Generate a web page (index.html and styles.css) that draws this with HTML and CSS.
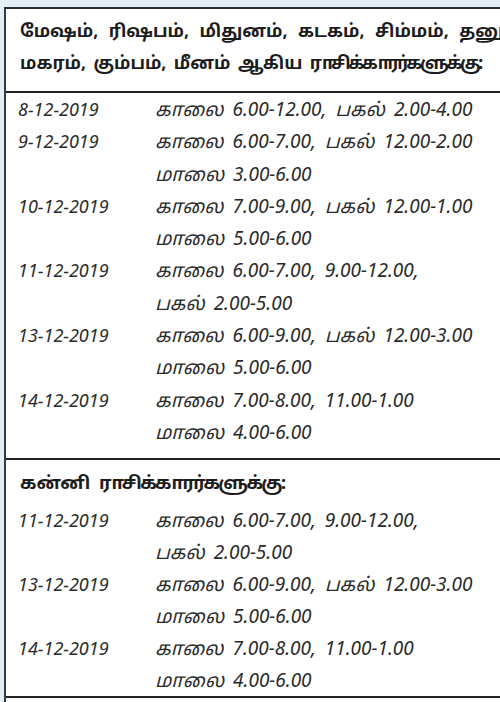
FILE: index.html
```html
<!DOCTYPE html>
<html lang="ta">
<head>
<meta charset="utf-8">
<link rel="stylesheet" href="styles.css">
</head>
<body>
<div class="frame">
  <section class="sec sec-first">
    <div class="head">
      <div class="hl">மேஷம், ரிஷபம், மிதுனம், கடகம், சிம்மம், தனுசு,</div>
      <div class="hl hl-two">மகரம், கும்பம், மீனம் ஆகிய <span class="tight">ராசிக்காரர்களுக்கு:</span></div>
    </div>
    <div class="rows rows-first">
      <div class="d">8-12-2019</div><div class="t">காலை 6.00-12.00, பகல் 2.00-4.00</div>
      <div class="d">9-12-2019</div><div class="t">காலை 6.00-7.00, பகல் 12.00-2.00<br>மாலை 3.00-6.00</div>
      <div class="d">10-12-2019</div><div class="t">காலை 7.00-9.00, பகல் 12.00-1.00<br>மாலை 5.00-6.00</div>
      <div class="d">11-12-2019</div><div class="t">காலை 6.00-7.00, 9.00-12.00,<br>பகல் 2.00-5.00</div>
      <div class="d">13-12-2019</div><div class="t">காலை 6.00-9.00, பகல் 12.00-3.00<br>மாலை 5.00-6.00</div>
      <div class="d">14-12-2019</div><div class="t">காலை 7.00-8.00, 11.00-1.00<br>மாலை 4.00-6.00</div>
    </div>
  </section>
  <section class="sec sec-second">
    <div class="head head-second">
      <div class="hl">கன்னி <span class="tight">ராசிக்காரர்களுக்கு:</span></div>
    </div>
    <div class="rows rows-second">
      <div class="d">11-12-2019</div><div class="t">காலை 6.00-7.00, 9.00-12.00,<br>பகல் 2.00-5.00</div>
      <div class="d">13-12-2019</div><div class="t">காலை 6.00-9.00, பகல் 12.00-3.00<br>மாலை 5.00-6.00</div>
      <div class="d">14-12-2019</div><div class="t">காலை 7.00-8.00, 11.00-1.00<br>மாலை 4.00-6.00</div>
    </div>
  </section>
</div>
</body>
</html>
```
FILE: styles.css
```css
html, body {
  margin: 0;
  padding: 0;
  width: 500px;
  height: 702px;
  overflow: hidden;
  background: #e3edf6;
}
body {
  font-family: "Noto Sans", "Noto Sans Tamil", "DejaVu Sans", sans-serif;
  color: #1c1c1c;
}
.frame {
  margin: 7px 0 0 4px;
  width: 496px;
  height: 720px;
  background: #ffffff;
  border-top: 2px solid #2a2a2a;
  border-left: 2px solid #3a3a3a;
  overflow: hidden;
}
.sec {
  border-bottom: 2px solid #222;
}
.head {
  padding: 5px 0 13px 14px;
  font-weight: bold;
  font-size: 17.5px;
  line-height: 32px;
  white-space: nowrap;
  word-spacing: 6px;
  border-bottom: 2px solid #222;
}
.hl-two {
  word-spacing: 3px;
}
.tight {
  letter-spacing: -2.4px;
}
.head-second {
  border-bottom: none;
  padding: 6px 0 6px 14px;
  font-size: 18px;
  word-spacing: 4px;
}
.head-second .tight {
  letter-spacing: -1.6px;
}
.rows {
  display: grid;
  grid-template-columns: 137px 1fr;
  padding-left: 12px;
  font-style: italic;
  font-size: 19px;
  line-height: 32.3px;
  color: #2a2a2a;
}
.d {
  font-size: 18px;
}
.t {
  white-space: nowrap;
  word-spacing: 4px;
}
.rows-first {
  padding-top: 0;
  padding-bottom: 10px;
}
.rows-second {
  padding-top: 0;
  line-height: 32px;
}
```
